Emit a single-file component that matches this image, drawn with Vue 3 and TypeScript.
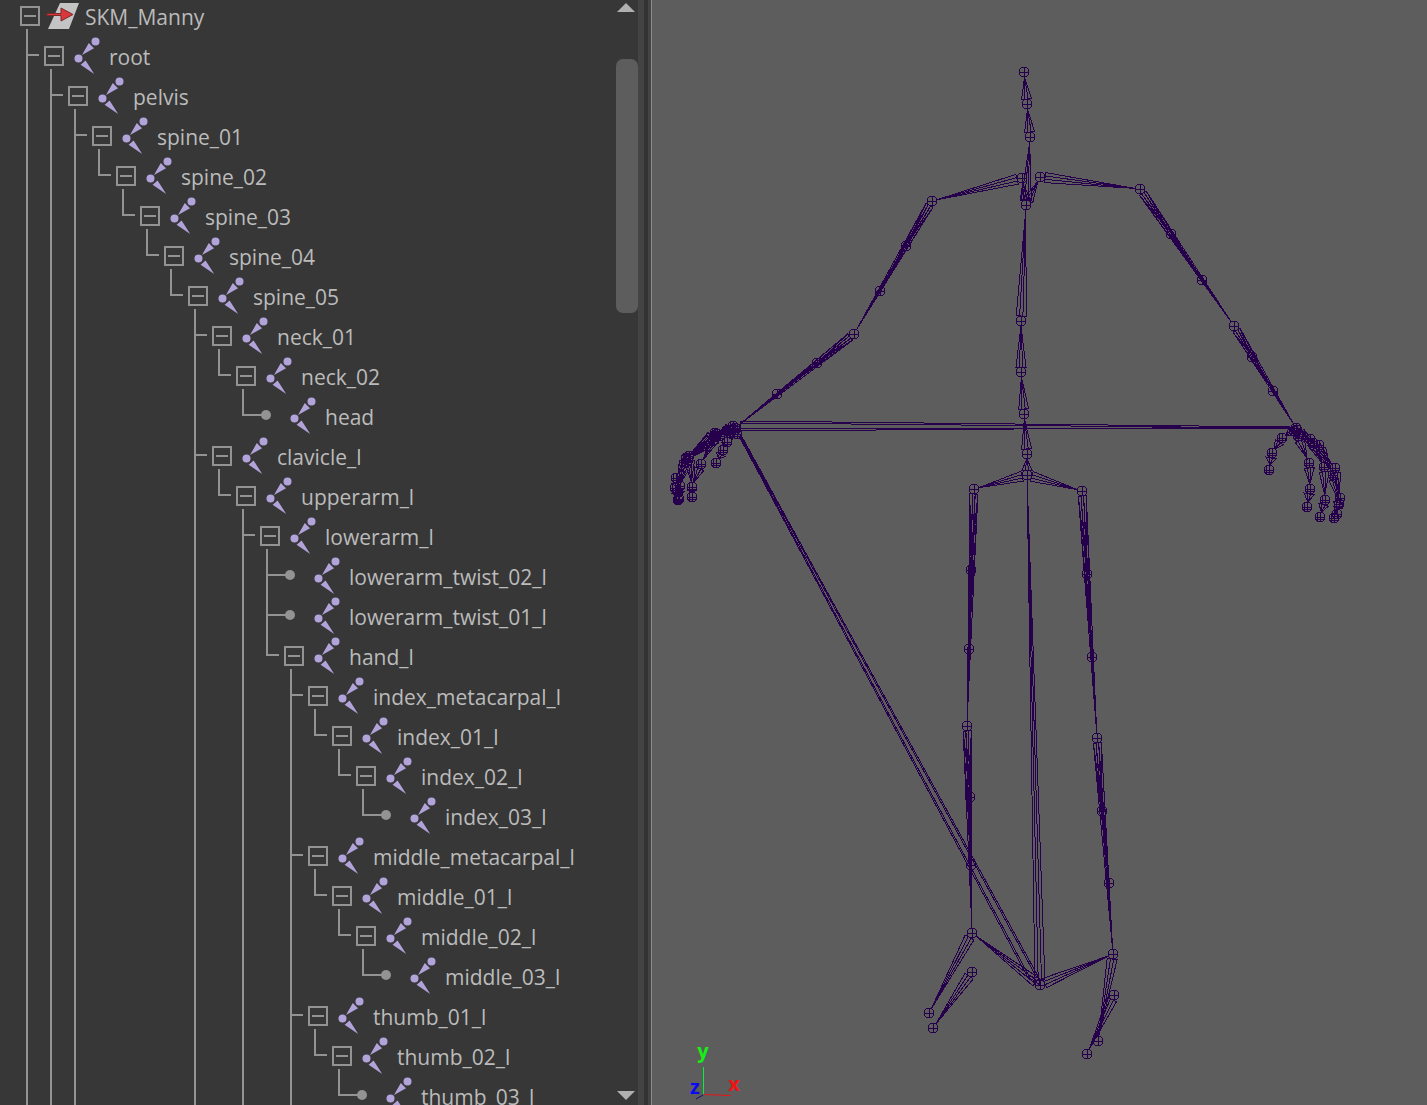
<script setup lang="ts">
import { computed, ref } from 'vue'

interface TreeNode {
  name: string
  depth: number
}
interface Row {
  node: TreeNode
  index: number
  leaf: boolean
  last: boolean
  open: boolean
  through: boolean[]
}
type Point = [number, number]

const nodes: TreeNode[] = [
  { name: 'SKM_Manny', depth: 0 },
  { name: 'root', depth: 1 },
  { name: 'pelvis', depth: 2 },
  { name: 'spine_01', depth: 3 },
  { name: 'spine_02', depth: 4 },
  { name: 'spine_03', depth: 5 },
  { name: 'spine_04', depth: 6 },
  { name: 'spine_05', depth: 7 },
  { name: 'neck_01', depth: 8 },
  { name: 'neck_02', depth: 9 },
  { name: 'head', depth: 10 },
  { name: 'clavicle_l', depth: 8 },
  { name: 'upperarm_l', depth: 9 },
  { name: 'lowerarm_l', depth: 10 },
  { name: 'lowerarm_twist_02_l', depth: 11 },
  { name: 'lowerarm_twist_01_l', depth: 11 },
  { name: 'hand_l', depth: 11 },
  { name: 'index_metacarpal_l', depth: 12 },
  { name: 'index_01_l', depth: 13 },
  { name: 'index_02_l', depth: 14 },
  { name: 'index_03_l', depth: 15 },
  { name: 'middle_metacarpal_l', depth: 12 },
  { name: 'middle_01_l', depth: 13 },
  { name: 'middle_02_l', depth: 14 },
  { name: 'middle_03_l', depth: 15 },
  { name: 'thumb_01_l', depth: 12 },
  { name: 'thumb_02_l', depth: 13 },
  { name: 'thumb_03_l', depth: 14 },
]

// Depths whose branch goes on below the loaded part of the hierarchy
const unfinished = new Set([1, 2, 3, 8, 10, 12])

const collapsed = ref(new Set<number>())

function hasNext(index: number, depth: number): boolean {
  for (let i = index + 1; i < nodes.length; i++) {
    if (nodes[i].depth < depth) return false
    if (nodes[i].depth === depth) return true
  }
  return unfinished.has(depth)
}

const rows = computed<Row[]>(() => {
  const out: Row[] = []
  let hiddenBelow = Infinity
  nodes.forEach((node, index) => {
    if (node.depth > hiddenBelow) return
    hiddenBelow = collapsed.value.has(index) ? node.depth : Infinity
    const next = nodes[index + 1]
    const through: boolean[] = []
    for (let d = 1; d < node.depth; d++) through.push(hasNext(index, d))
    out.push({
      node,
      index,
      leaf: !next || next.depth <= node.depth,
      last: !hasNext(index, node.depth),
      open: !collapsed.value.has(index),
      through,
    })
  })
  return out
})

function toggle(index: number) {
  const set = new Set(collapsed.value)
  if (!set.delete(index)) set.add(index)
  collapsed.value = set
}

const list = ref<HTMLElement | null>(null)
function scroll(by: number) {
  list.value?.scrollBy({ top: by })
}

// A bone is a wedge: wide at the parent joint, pointed at the child joint
function wedge(a: Point, b: Point, half: number): string {
  const dx = b[0] - a[0]
  const dy = b[1] - a[1]
  const len = Math.hypot(dx, dy) || 1
  const ux = dx / len
  const uy = dy / len
  const start = Math.min(5, len / 3)
  const bx = a[0] + ux * start
  const by = a[1] + uy * start
  const tip = `${(b[0] - ux * 5).toFixed(1)} ${(b[1] - uy * 5).toFixed(1)}`
  const at = (k: number) => `${(bx - uy * k).toFixed(1)} ${(by + ux * k).toFixed(1)}`
  const inner = half / 3
  return `M${at(half)}L${tip}L${at(-half)}ZM${at(inner)}L${tip}L${at(-inner)}`
}

// A limb with twist joints has one wedge from its first joint to each other joint
function limb(joints: Point[], half: number): string {
  return joints.slice(1).map((p) => wedge(joints[0], p, half)).join('')
}

function chain(joints: Point[], half: number): string {
  return joints.slice(1).map((p, i) => wedge(joints[i], p, half)).join('')
}

function ring([x, y]: Point, r: number): string {
  return `M${x - r} ${y}a${r} ${r} 0 1 0 ${2 * r} 0a${r} ${r} 0 1 0 ${-2 * r} 0h${2 * r}M${x} ${y - r}v${2 * r}`
}

// A joint sphere has its outline, its axes and a narrow inner meridian
function sphere([x, y]: Point): string {
  return ring([x, y], 5) + `M${x - 5} ${y}a5 3 0 1 0 10 0M${x} ${y - 5}a3 5 0 1 0 0 10`
}

const limbs: Point[][] = [
  [[932, 201], [906, 246], [880, 291], [854, 334]],
  [[854, 334], [817, 363], [777, 394], [735, 428]],
  [[1140, 189], [1171, 234], [1202, 280], [1234, 326]],
  [[1234, 326], [1252, 357], [1273, 391], [1296, 428]],
  [[974, 489], [971, 570], [969, 649], [967, 726]],
  [[967, 726], [970, 797], [971, 865], [972, 933]],
  [[1082, 491], [1087, 574], [1092, 657], [1097, 738]],
  [[1097, 738], [1102, 811], [1109, 883], [1113, 954]],
]
const chains: Point[][] = [
  [[1027, 475], [1027, 454], [1024, 414], [1021, 372], [1021, 321], [1026, 205], [1030, 137], [1027, 104], [1024, 72]],
  [[1026, 205], [1022, 178], [932, 201]],
  [[1026, 205], [1040, 177], [1140, 189]],
  [[1027, 475], [974, 489]],
  [[1027, 475], [1082, 491]],
  [[972, 933], [929, 1013]],
  [[972, 972], [933, 1028]],
  [[1113, 954], [1098, 1041]],
  [[1114, 995], [1087, 1054]],
]
const fingers: Point[][] = [
  [[735, 430], [727, 442], [723, 450], [716, 463]],
  [[735, 428], [717, 434], [701, 464], [692, 487], [692, 497]],
  [[733, 426], [716, 437], [689, 456], [692, 487]],
  [[730, 430], [715, 433], [686, 458], [676, 478], [678, 492]],
  [[737, 434], [720, 436], [688, 460], [680, 486], [678, 500]],
  [[733, 429], [714, 436], [686, 459], [675, 488], [679, 499]],
  [[1296, 428], [1282, 438], [1272, 453], [1269, 470]],
  [[1296, 428], [1298, 436], [1309, 463], [1310, 489], [1307, 507]],
  [[1297, 430], [1310, 439], [1324, 467], [1325, 500], [1320, 517]],
  [[1294, 431], [1313, 443], [1335, 468], [1340, 498], [1334, 518]],
  [[1299, 434], [1319, 445], [1333, 475], [1339, 504], [1337, 514]],
]
const root: Point = [1040, 985]

const bones = [
  ...limbs.map((l) => limb(l, 4)),
  ...chains.map((c) => chain(c, 5)),
  ...fingers.map((f) => chain(f, 5)),
  wedge(root, [1027, 475], 5),
  wedge(root, [972, 933], 5),
  wedge(root, [1113, 954], 5),
].join('')

const spheres = [root, ...[...limbs, ...chains].flat()].map((p) => ring(p, 5)).join('')
const knuckles = fingers.flat().map(sphere).join('')
</script>

<template>
  <main class="workspace">
    <section class="outliner" aria-label="Outliner">
      <ul ref="list" class="tree" role="tree">
        <li v-for="row in rows" :key="row.index" class="row" role="treeitem" :aria-level="row.node.depth + 1">
          <svg v-for="(on, i) in row.through" :key="i" class="guide" viewBox="0 0 24 40">
            <path v-if="on" d="M7 0V40" />
          </svg>
          <svg v-if="row.node.depth > 0" class="guide" viewBox="0 0 24 40">
            <path :d="row.last ? 'M7 0V20' : 'M7 0V40'" />
            <path :d="row.leaf ? 'M6 19H26' : 'M6 19H19'" />
          </svg>
          <span v-if="row.leaf" class="knob">
            <svg viewBox="0 0 20 40"><path d="M0 19H4" /><circle cx="6" cy="19" r="5" /></svg>
          </span>
          <span v-else class="knob">
            <button
              class="toggle"
              type="button"
              :aria-label="(row.open ? 'Collapse ' : 'Expand ') + row.node.name"
              @click="toggle(row.index)"
            >
              <svg viewBox="0 0 16 16"><path :d="row.open ? 'M2 8H14' : 'M2 8H14M8 2V14'" /></svg>
            </button>
            <svg v-if="row.open" class="stem" viewBox="0 0 20 7"><path d="M7 0V7" /></svg>
          </span>
          <svg v-if="row.node.depth === 0" class="icon" viewBox="0 0 28 40">
            <path d="M12 7H31L21 33H0Z" fill="#c4c4c4" />
            <path d="M-1 17.500H13V12L25 18.500L13 25V19.500H-1Z" fill="#d8383b" stroke="#7d2a2c" stroke-width="1" />
          </svg>
          <svg v-else class="icon" viewBox="0 0 28 40">
            <g fill="#b2a3db">
              <circle cx="23.5" cy="5.5" r="4" />
              <circle cx="6.5" cy="22.5" r="4" />
              <path d="M10 19L16.800 7L22 12.200Z" />
              <path d="M8.600 28.800L13.600 24.400L22.200 38Z" />
            </g>
          </svg>
          <span class="name">{{ row.node.name }}</span>
        </li>
      </ul>
      <div class="scrollbar">
        <button type="button" class="step" aria-label="Scroll up" @click="scroll(-40)">
          <svg viewBox="0 0 22 20"><path d="M1 12H19L10 3Z" /></svg>
        </button>
        <div class="track">
          <div class="before"></div>
          <div class="thumb"></div>
          <div class="after"></div>
        </div>
        <button type="button" class="step" aria-label="Scroll down" @click="scroll(40)">
          <svg viewBox="0 0 22 20"><path d="M1 6H19L10 15Z" /></svg>
        </button>
      </div>
      <div class="splitter"></div>
    </section>

    <section class="viewport" aria-label="Perspective view">
      <svg class="scene" viewBox="652 0 775 1105">
        <g class="wire">
          <path :d="bones" />
          <path :d="spheres" />
          <path :d="knuckles" />
          <path d="M740 421L1290 427M740 423L1290 428M740 431L1290 427M740 429L1290 428M740 421V432" />
          <path d="M739 436L1027 976M740 436L1029 976M740 435L1037 978M741 435L1039 978M1027 976L1039 978L1040 985Z" />
        </g>
        <path d="M703.500 1067V1094" stroke="#00f03c" />
        <path d="M704 1094.500L731 1095.500" stroke="#e81414" />
        <path d="M703 1095L696 1099" stroke="#10106e" />
        <g class="axis">
          <text x="703" y="1058" fill="#14f014">y</text>
          <text x="695" y="1094" fill="#0a0af0">z</text>
          <text x="734" y="1091" fill="#f01414">x</text>
        </g>
      </svg>
    </section>
  </main>
</template>

<style>
body {
  margin: 0;
  background: #5d5d5d;
}
</style>

<style scoped>
.workspace {
  display: grid;
  grid-template-columns: minmax(0, 652fr) minmax(0, 775fr);
  height: 100vh;
  overflow: hidden;
  font-family: 'Open Sans', 'Noto Sans', sans-serif;
}
.outliner {
  display: flex;
  min-height: 0;
  background: #373737;
}
.tree {
  flex: 1;
  min-width: 0;
  margin: -4px 0 0;
  padding: 0 0 0 20px;
  list-style: none;
  overflow: auto;
  scrollbar-width: none;
}
.row {
  display: flex;
  height: 40px;
}
svg {
  display: block;
  overflow: visible;
}
.guide {
  flex: none;
  width: 24px;
  height: 40px;
}
.guide path,
.knob path {
  fill: none;
  stroke: #939393;
  stroke-width: 2;
}
.knob {
  flex: none;
  display: flex;
  flex-direction: column;
  width: 20px;
  height: 40px;
}
.knob circle {
  fill: #939393;
}
.toggle {
  flex: none;
  box-sizing: border-box;
  width: 20px;
  height: 20px;
  margin: 10px 0 3px;
  padding: 0;
  border: 2px solid #939393;
  background: none;
}
.toggle svg {
  width: 16px;
  height: 16px;
}
.stem {
  width: 20px;
  height: 7px;
}
.icon {
  flex: none;
  width: 28px;
  height: 40px;
  margin: 0 9px 0 8px;
}
.name {
  color: #bbbbbb;
  font-size: 21px;
  line-height: 42px;
  white-space: nowrap;
}
.scrollbar {
  display: flex;
  flex-direction: column;
  width: 22px;
}
.step {
  height: 20px;
  padding: 0;
  border: 0;
  background: none;
}
.step svg {
  width: 22px;
  height: 20px;
  fill: #b0b0b0;
}
.track {
  flex: 1;
  display: flex;
  flex-direction: column;
}
.before {
  flex: 39 0 0;
}
.thumb {
  flex: 254 0 0;
  border-radius: 7px;
  background: #5d5d5d;
}
.after {
  flex: 772 0 0;
}
.splitter {
  box-sizing: border-box;
  width: 14px;
  border-left: 6px solid #444444;
  border-right: 1px solid #8c8c8c;
  background: linear-gradient(to right, #333333 4px, #444444 4px);
}
.viewport {
  display: flex;
  min-height: 0;
  background: #5d5d5d;
}
.scene {
  width: 100%;
  height: 100%;
}
.wire path {
  fill: none;
  stroke: #26004d;
  stroke-width: 1;
  shape-rendering: crispEdges;
}
.axis {
  font-size: 20px;
  font-weight: 700;
  text-anchor: middle;
}
</style>
